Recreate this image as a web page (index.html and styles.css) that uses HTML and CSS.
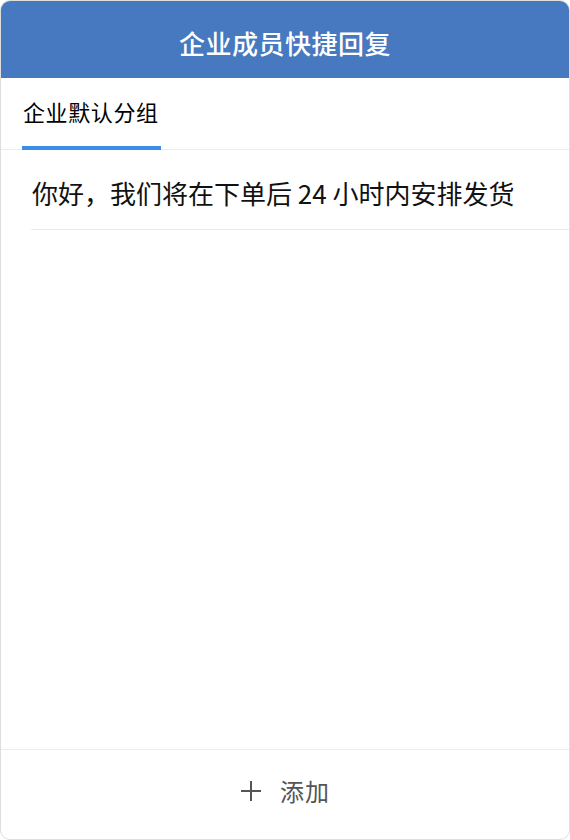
FILE: index.html
```html
<!doctype html>
<html>
  <head>
    <title>企业成员快捷回复</title>
    <meta name="viewport" content="width=device-width, initial-scale=1">
    <link rel="stylesheet" href="styles.css">
  </head>
  <body>
    <div class="panel">
      <div class="panel-head">企业成员快捷回复</div>

      <div class="tabs">
        <div class="tab active">企业默认分组</div>
      </div>

      <ul class="replies">
        <li class="reply">你好，我们将在下单后 24 小时内安排发货</li>
      </ul>

      <div class="panel-foot">
        <span class="add-icon">
          <svg width="22" height="22" viewBox="0 0 22 22">
            <path d="M11 1v20M1 11h20" stroke="currentColor" stroke-width="2" fill="none"/>
          </svg>
        </span>
        <span>添加</span>
      </div>
    </div>
  </body>
</html>
```

FILE: styles.css
```css
html, body {
    margin: 0;
    padding: 0;
}
body {
    font-family: "Noto Sans CJK SC", "Noto Sans", sans-serif;
    color: #111;
    background: #fff;
}
.panel {
    /* Whole window is the panel */
    width: 570px;
    height: 840px;
    box-sizing: border-box;
    border: 1px solid #dedede;
    border-radius: 10px;
    overflow: hidden;
    display: flex;
    flex-direction: column;
}
.panel-head {
    height: 77px;
    flex: none;
    display: flex;
    align-items: center;
    justify-content: center;
    padding-top: 6px;
    box-sizing: border-box;
    background: #4679bf;
    color: #fff;
    font-size: 26px;
    font-weight: 500;
    letter-spacing: 0.5px;
}
.tabs {
    height: 72px;
    flex: none;
    display: flex;
    padding-left: 21px;
    border-bottom: 1px solid #ececec;
    box-sizing: border-box;
}
.tab {
    display: flex;
    align-items: center;
    padding: 0 2px 2px 1px;
    font-size: 22px;
    letter-spacing: 0.6px;
    color: #000;
    border-bottom: 4px solid transparent;
    margin-bottom: -1px;
}
.tab.active {
    border-bottom-color: #3a8ee6;
}
.replies {
    flex: 1;
    list-style: none;
    margin: 0;
    padding: 0;
}
.reply {
    margin-left: 30px;
    height: 80px;
    box-sizing: border-box;
    display: flex;
    align-items: center;
    padding-left: 1px;
    padding-top: 6px;
    border-bottom: 1px solid #ebebeb;
    font-size: 26px;
}
.panel-foot {
    height: 90px;
    flex: none;
    box-sizing: border-box;
    border-top: 1px solid #ececec;
    display: flex;
    align-items: center;
    justify-content: center;
    gap: 18px;
    padding-bottom: 8px;
    color: #555;
    font-size: 24px;
    letter-spacing: 1px;
}
.add-icon {
    display: flex;
}
```
